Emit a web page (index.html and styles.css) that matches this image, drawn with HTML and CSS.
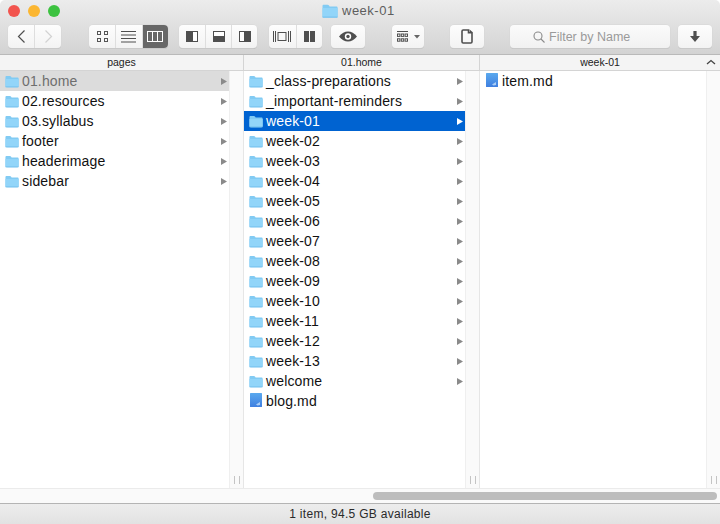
FILE: index.html
```html
<!DOCTYPE html>
<html lang="en">
<head>
<meta charset="utf-8">
<title>week-01</title>
<link rel="stylesheet" href="styles.css">
</head>
<body>
<svg class="defs" width="0" height="0" aria-hidden="true">
  <defs>
    <linearGradient id="docfill" x1="0" y1="0" x2="0" y2="1">
      <stop offset="0" stop-color="#5aa9ee"/>
      <stop offset="1" stop-color="#3f7fe0"/>
    </linearGradient>
    <symbol id="folder" viewBox="0 0 16 14">
      <path d="M0.5 2.2C0.5 1.3 1 .8 1.8 .8H5.6C6.3 .8 6.6 1.1 7 1.6L7.6 2.4H14.3C15.1 2.4 15.6 2.9 15.6 3.7V12.2C15.6 13 15.1 13.5 14.3 13.5H1.8C1 13.5 .5 13 .5 12.2Z" fill="#82cbf3"/>
      <path d="M0.5 4H15.6V12.2C15.6 13 15.1 13.5 14.3 13.5H1.8C1 13.5 .5 13 .5 12.2Z" fill="#92d5f9"/>
      <path d="M0.5 13.1H15.6" stroke="#6fbdea" stroke-width=".8"/>
    </symbol>
    <symbol id="doc" viewBox="0 0 12 14">
      <rect x="0" y="0" width="12" height="14" rx=".5" fill="url(#docfill)"/>
      <path d="M6 11.5L10 9V12L7.5 12.5Z" fill="#a9cdf6"/>
    </symbol>
    <symbol id="arrow" viewBox="0 0 6 7">
      <path d="M0 0L6 3.5L0 7Z"/>
    </symbol>
    <symbol id="grip" viewBox="0 0 6 8">
      <path d="M.5 0V8M5.5 0V8" stroke="#c4c4c4" fill="none"/>
    </symbol>
  </defs>
</svg>
<div class="window">
  <header class="chrome">
    <div class="titlebar">
      <div class="lights">
        <span class="light red"></span>
        <span class="light yellow"></span>
        <span class="light green"></span>
      </div>
      <div class="title"><svg class="title-icon"><use href="#folder"/></svg>week-01</div>
    </div>
    <div class="toolbar">
      <div class="group nav">
        <button class="seg"><svg width="9" height="13" viewBox="0 0 9 13"><path d="M7.5 .5L1.5 6.5L7.5 12.5" fill="none" stroke="#4f4f4f" stroke-width="1.2"/></svg></button>
        <button class="seg"><svg width="9" height="13" viewBox="0 0 9 13"><path d="M1.5 .5L7.5 6.5L1.5 12.5" fill="none" stroke="#d2d2d2" stroke-width="1.2"/></svg></button>
      </div>
      <div class="group views">
        <button class="seg"><svg width="11" height="11" viewBox="0 0 11 11" fill="none" stroke="#555"><rect x=".5" y=".5" width="3" height="3"/><rect x="7.5" y=".5" width="3" height="3"/><rect x=".5" y="7.5" width="3" height="3"/><rect x="7.5" y="7.5" width="3" height="3"/></svg></button>
        <button class="seg"><svg width="15" height="12" viewBox="0 0 15 12" stroke="#4f4f4f"><path d="M0 .5H15M0 4H15M0 7.5H15M0 11H15"/></svg></button>
        <button class="seg on"><svg width="16" height="11" viewBox="0 0 16 11" fill="none" stroke="#fff" stroke-width="1"><rect x=".5" y=".5" width="15" height="10"/><path d="M5.5 .5V10.5M10.5 .5V10.5"/></svg></button>
      </div>
      <div class="group panes">
        <button class="seg"><svg width="12" height="11" viewBox="0 0 12 11"><rect x=".5" y=".5" width="11" height="10" fill="#fff" stroke="#4f4f4f"/><rect x="0" y="0" width="7" height="11" fill="#4f4f4f"/></svg></button>
        <button class="seg"><svg width="12" height="11" viewBox="0 0 12 11"><rect x=".5" y=".5" width="11" height="10" fill="#fff" stroke="#4f4f4f"/><rect x="0" y="5" width="12" height="6" fill="#4f4f4f"/></svg></button>
        <button class="seg"><svg width="12" height="11" viewBox="0 0 12 11"><rect x=".5" y=".5" width="11" height="10" fill="#fff" stroke="#4f4f4f"/><rect x="5" y="0" width="7" height="11" fill="#4f4f4f"/></svg></button>
      </div>
      <div class="group modes">
        <button class="seg"><svg width="18" height="11" viewBox="0 0 18 11" fill="none" stroke="#4f4f4f"><rect x="5" y="1.5" width="8" height="8"/><path d="M.5 0V11M2.5 0V11M15.5 0V11M17.5 0V11"/></svg></button>
        <button class="seg"><svg width="11" height="11" viewBox="0 0 11 11" fill="#4f4f4f"><rect width="5" height="11"/><rect x="6" width="5" height="11"/></svg></button>
      </div>
      <div class="group eye">
        <button class="seg"><svg width="18" height="11" viewBox="0 0 18 11"><path d="M0 5.5C3 2 5.5 .5 9 .5S15 2 18 5.5C15 9 12.5 10.5 9 10.5S3 9 0 5.5Z" fill="#4f4f4f"/><circle cx="9" cy="5.5" r="3.2" fill="#fff"/><circle cx="9" cy="5.5" r="1.7" fill="#4f4f4f"/></svg></button>
      </div>
      <div class="group arrange">
        <button class="seg"><svg width="23" height="11" viewBox="0 0 23 11"><g fill="none" stroke="#4f4f4f"><path d="M0 .5H11"/><rect x=".5" y="3" width="2.4" height="2.4"/><rect x="4.3" y="3" width="2.4" height="2.4"/><rect x="8.1" y="3" width="2.4" height="2.4"/><rect x=".5" y="7.8" width="2.4" height="2.4"/><rect x="4.3" y="7.8" width="2.4" height="2.4"/><rect x="8.1" y="7.8" width="2.4" height="2.4"/></g><path d="M17 4H23L20 7.5Z" fill="#666"/></svg></button>
      </div>
      <div class="group action">
        <button class="seg"><svg width="12" height="15" viewBox="0 0 12 15"><path d="M1 2.2C1 1.4 1.4 1 2.2 1H7.5V3.7H11V12.8C11 13.6 10.6 14 9.8 14H2.2C1.4 14 1 13.6 1 12.8Z" fill="none" stroke="#4f4f4f" stroke-width="1.6"/><path d="M8.6 .5L11.5 3H8.6Z" fill="#4f4f4f"/></svg></button>
      </div>
      <div class="search">
        <svg width="12" height="12" viewBox="0 0 12 12" fill="none" stroke="#8b8b8b" stroke-width="1.1"><circle cx="5" cy="5" r="4"/><path d="M8 8L11.5 11.5"/></svg>
        <span>Filter by Name</span>
      </div>
      <div class="group download">
        <button class="seg"><svg width="10" height="11" viewBox="0 0 10 11"><path d="M3.4 0H6.6V5H10L5 11L0 5H3.4Z" fill="#4f4f4f"/></svg></button>
      </div>
    </div>
  </header>

  <div class="heads">
    <div class="head first">pages</div>
    <div class="head second">01.home</div>
    <div class="head third">week-01<svg class="caret" width="10" height="6" viewBox="0 0 10 6"><path d="M1 5L5 1.5L9 5" fill="none" stroke="#444" stroke-width="1.3"/></svg></div>
  </div>

  <div class="columns">
    <section class="col first">
      <ul class="list">
        <li class="row sel-grey"><svg class="ico"><use href="#folder"/></svg><span class="name">01.home</span><svg class="arr"><use href="#arrow"/></svg></li>
        <li class="row"><svg class="ico"><use href="#folder"/></svg><span class="name">02.resources</span><svg class="arr"><use href="#arrow"/></svg></li>
        <li class="row"><svg class="ico"><use href="#folder"/></svg><span class="name">03.syllabus</span><svg class="arr"><use href="#arrow"/></svg></li>
        <li class="row"><svg class="ico"><use href="#folder"/></svg><span class="name">footer</span><svg class="arr"><use href="#arrow"/></svg></li>
        <li class="row"><svg class="ico"><use href="#folder"/></svg><span class="name">headerimage</span><svg class="arr"><use href="#arrow"/></svg></li>
        <li class="row"><svg class="ico"><use href="#folder"/></svg><span class="name">sidebar</span><svg class="arr"><use href="#arrow"/></svg></li>
      </ul>
      <div class="strip"><svg class="grip"><use href="#grip"/></svg></div>
    </section>
    <section class="col second">
      <ul class="list">
        <li class="row"><svg class="ico"><use href="#folder"/></svg><span class="name">_class-preparations</span><svg class="arr"><use href="#arrow"/></svg></li>
        <li class="row"><svg class="ico"><use href="#folder"/></svg><span class="name">_important-reminders</span><svg class="arr"><use href="#arrow"/></svg></li>
        <li class="row sel-blue"><svg class="ico"><use href="#folder"/></svg><span class="name">week-01</span><svg class="arr"><use href="#arrow"/></svg></li>
        <li class="row"><svg class="ico"><use href="#folder"/></svg><span class="name">week-02</span><svg class="arr"><use href="#arrow"/></svg></li>
        <li class="row"><svg class="ico"><use href="#folder"/></svg><span class="name">week-03</span><svg class="arr"><use href="#arrow"/></svg></li>
        <li class="row"><svg class="ico"><use href="#folder"/></svg><span class="name">week-04</span><svg class="arr"><use href="#arrow"/></svg></li>
        <li class="row"><svg class="ico"><use href="#folder"/></svg><span class="name">week-05</span><svg class="arr"><use href="#arrow"/></svg></li>
        <li class="row"><svg class="ico"><use href="#folder"/></svg><span class="name">week-06</span><svg class="arr"><use href="#arrow"/></svg></li>
        <li class="row"><svg class="ico"><use href="#folder"/></svg><span class="name">week-07</span><svg class="arr"><use href="#arrow"/></svg></li>
        <li class="row"><svg class="ico"><use href="#folder"/></svg><span class="name">week-08</span><svg class="arr"><use href="#arrow"/></svg></li>
        <li class="row"><svg class="ico"><use href="#folder"/></svg><span class="name">week-09</span><svg class="arr"><use href="#arrow"/></svg></li>
        <li class="row"><svg class="ico"><use href="#folder"/></svg><span class="name">week-10</span><svg class="arr"><use href="#arrow"/></svg></li>
        <li class="row"><svg class="ico"><use href="#folder"/></svg><span class="name">week-11</span><svg class="arr"><use href="#arrow"/></svg></li>
        <li class="row"><svg class="ico"><use href="#folder"/></svg><span class="name">week-12</span><svg class="arr"><use href="#arrow"/></svg></li>
        <li class="row"><svg class="ico"><use href="#folder"/></svg><span class="name">week-13</span><svg class="arr"><use href="#arrow"/></svg></li>
        <li class="row"><svg class="ico"><use href="#folder"/></svg><span class="name">welcome</span><svg class="arr"><use href="#arrow"/></svg></li>
        <li class="row"><svg class="ico doc"><use href="#doc"/></svg><span class="name">blog.md</span></li>
      </ul>
      <div class="strip"><svg class="grip"><use href="#grip"/></svg></div>
    </section>
    <section class="col third">
      <ul class="list">
        <li class="row"><svg class="ico doc"><use href="#doc"/></svg><span class="name">item.md</span></li>
      </ul>
      <div class="strip"><svg class="grip"><use href="#grip"/></svg></div>
    </section>
  </div>

  <div class="hscroll"><div class="thumb"></div></div>
  <footer class="status">1 item, 94.5 GB available</footer>
</div>
</body>
</html>
```
FILE: styles.css
```css
* { box-sizing: border-box; }
html, body { margin: 0; padding: 0; }
body { width: 720px; height: 524px; overflow: hidden; background: #fff; font-family: "Liberation Sans", Arial, sans-serif; }
.defs { position: absolute; }
.window { display: flex; flex-direction: column; width: 720px; height: 524px; }

.chrome { height: 55px; flex: none; background: linear-gradient(#ececec, #d3d3d3); border-bottom: 1px solid #b9b9b9; border-radius: 5px 5px 0 0; }
.titlebar { display: flex; align-items: center; height: 22px; padding: 0 8px; position: relative; }
.lights { display: flex; gap: 8px; }
.light { width: 12px; height: 12px; border-radius: 50%; }
.red { background: #f2544e; }
.yellow { background: #fbb631; }
.green { background: #3cc240; }
.title { position: absolute; left: 322px; top: 3px; display: flex; align-items: center; gap: 4px; font-size: 13px; line-height: 16px; letter-spacing: .5px; color: #5e5e5e; }
.title-icon { width: 16px; height: 14px; }

.toolbar { display: flex; align-items: flex-start; height: 32px; padding: 3px 0 0 8px; }
.group { display: flex; height: 23px; background: linear-gradient(#fdfdfd, #f3f3f3); border-radius: 4px; box-shadow: 0 0 0 .5px #d6d6d6, 0 1px 0 #bdbdbd; }
.seg { display: flex; align-items: center; justify-content: center; height: 23px; padding: 0; border: 0; background: none; border-left: 1px solid #dedede; }
.seg:first-child { border-left: 0; }
.seg.on { background: #676767; border-radius: 0 4px 4px 0; }

.nav { width: 53px; margin-right: 28px; }
.nav .seg { width: 27px; }
.views { width: 79px; margin-right: 11px; }
.views .seg { width: 26.33px; }
.panes { width: 78px; margin-right: 12px; }
.panes .seg { width: 26px; }
.modes { width: 53px; margin-right: 9px; }
.modes .seg { width: 26.5px; }
.eye { width: 34px; margin-right: 27px; }
.eye .seg { width: 34px; }
.arrange { width: 32px; margin-right: 26px; }
.arrange .seg { width: 32px; }
.action { width: 34px; margin-right: 26px; }
.action .seg { width: 34px; }
.search { display: flex; align-items: center; width: 160px; height: 23px; margin-right: 8px; padding-left: 23px; gap: 4px; background: linear-gradient(#fbfbfb, #f1f1f1); border-radius: 4px; box-shadow: 0 0 0 .5px #d6d6d6, 0 1px 0 #bdbdbd; font-size: 12.5px; color: #9a9a9a; }
.download { width: 34px; }
.download .seg { width: 34px; }

.heads { display: flex; height: 16px; flex: none; background: #f4f4f4; border-bottom: 1px solid #d4d4d4; font-size: 10.5px; line-height: 15px; color: #222; text-align: center; }
.head { position: relative; border-right: 1px solid #d4d4d4; }
.head.first { width: 244px; }
.head.second { width: 236px; }
.head.third { flex: 1; border-right: 0; }
.caret { position: absolute; right: 4px; top: 4px; }

.columns { display: flex; flex: 1; min-height: 0; border-bottom: 1px solid #ebebeb; }
.col { display: flex; border-right: 1px solid #e6e6e6; }
.col.first { width: 244px; }
.col.second { width: 236px; }
.col.third { flex: 1; border-right: 0; }
.list { flex: 1; margin: 0; padding: 0; list-style: none; }
.strip { display: flex; flex: none; align-items: flex-end; justify-content: center; width: 14px; padding-bottom: 4px; background: #fafafa; border-left: 1px solid #efefef; }
.grip { display: block; width: 6px; height: 8px; }
.row { display: flex; align-items: center; height: 20px; padding: 0 5px; font-size: 14px; letter-spacing: .15px; color: #111; }
.ico { flex: none; width: 14px; height: 13px; margin-right: 3px; }
.ico.doc { width: 12px; height: 14px; margin: -2px 4px 0 1px; }
.name { flex: 1; white-space: nowrap; }
.arr { flex: none; width: 6px; height: 7px; fill: #8a8a8a; margin-right: -3px; }
.sel-grey { background: #dcdcdc; }
.sel-grey .name { color: #6e6e6e; }
.sel-blue { background: #0063d1; }
.sel-blue .name { color: #fff; }
.sel-blue .arr { fill: #fff; }

.hscroll { height: 14px; flex: none; background: #fafafa; padding: 3px 3px 0 373px; }
.thumb { height: 8px; border-radius: 4px; background: #bdbdbd; }
.status { height: 21px; flex: none; background: linear-gradient(#ededed, #e2e2e2); border-top: 1px solid #b4b4b4; font-size: 12px; line-height: 20px; letter-spacing: .3px; color: #2a2a2a; text-align: center; }
```
